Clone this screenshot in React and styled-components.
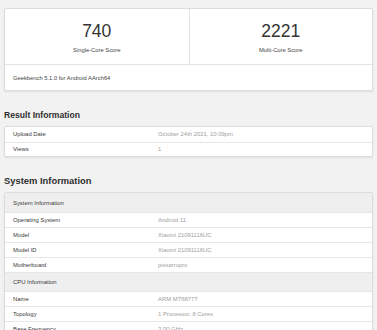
import React from "react";
import styled, { createGlobalStyle } from "styled-components";

const GlobalStyle = createGlobalStyle`
  html, body {
    margin: 0;
    padding: 0;
    background: #f2f2f2;
    font-family: "Liberation Sans", Arial, sans-serif;
    color: #333;
    overflow: hidden;
  }
`;

const Page = styled.div`
  padding: 0 4px;
  margin-top: -9px;
`;

const SectionTitle = styled.div`
  font-weight: bold;
  font-size: ${(p) => (p.$small ? "8.6px" : "9.4px")};
  line-height: 12px;
  height: 12px;
  color: #2f2f2f;
  margin: ${(p) => (p.$first ? "0" : "18px")} 0 5px;
  white-space: nowrap;
`;

const Card = styled.div`
  background: #fff;
  border: 1px solid #dcdcdc;
  border-radius: 2px;
  box-shadow: 0 1px 2px rgba(0, 0, 0, 0.08);
  overflow: hidden;
`;

const Scores = styled.div`
  display: grid;
  grid-template-columns: 1fr 1fr;
  height: 55px;
  border-bottom: 1px solid #e4e4e4;
`;

const ScoreCell = styled.div`
  display: flex;
  flex-direction: column;
  align-items: center;
  padding-top: 13px;
  box-sizing: border-box;
  & + & {
    border-left: 1px solid #e4e4e4;
  }
`;

const ScoreValue = styled.div`
  font-size: 17.5px;
  line-height: 18px;
  color: #333;
`;

const ScoreLabel = styled.div`
  font-size: 5.8px;
  line-height: 8px;
  margin-top: 6px;
  color: #444;
`;

const CardFooter = styled.div`
  height: 25px;
  display: flex;
  align-items: center;
  padding-left: 8px;
  font-size: 5.8px;
  color: #444;
`;

const Row = styled.div`
  display: grid;
  grid-template-columns: 145px 1fr;
  align-items: center;
  box-sizing: border-box;
  height: ${(p) => (p.$head ? "19px" : p.$tight ? "14.5px" : "15px")};
  padding-left: 8px;
  background: ${(p) => (p.$head ? "#efefef" : "#fff")};
  font-size: 5.9px;
  & + & {
    border-top: 1px solid #e6e6e6;
  }
`;

const Label = styled.div`
  color: #3a3a3a;
  white-space: nowrap;
`;

const Value = styled.div`
  color: #a0a0a0;
  white-space: nowrap;
`;

const resultRows = [
  ["Upload Date", "October 24th 2021, 10:09pm"],
  ["Views", "1"],
];

const systemRows = [
  { head: "System Information" },
  ["Operating System", "Android 11"],
  ["Model", "Xiaomi 21091116UC"],
  ["Model ID", "Xiaomi 21091116UC"],
  ["Motherboard", "pissarropro"],
  { head: "CPU Information" },
  ["Name", "ARM MT6877T"],
  ["Topology", "1 Processor, 8 Cores"],
  ["Base Frequency", "3.00 GHz"],
];

const InfoTable = ({ rows, tight }) => (
  <Card>
    {rows.map((r, i) =>
      r.head ? (
        <Row key={i} $head>
          <Label>{r.head}</Label>
        </Row>
      ) : (
        <Row key={i} $tight={tight}>
          <Label>{r[0]}</Label>
          <Value>{r[1]}</Value>
        </Row>
      )
    )}
  </Card>
);

export default function App() {
  return (
    <>
      <GlobalStyle />
      <Page>
        <SectionTitle $first>Benchmark Results</SectionTitle>
        <Card>
          <Scores>
            <ScoreCell>
              <ScoreValue>740</ScoreValue>
              <ScoreLabel>Single-Core Score</ScoreLabel>
            </ScoreCell>
            <ScoreCell>
              <ScoreValue>2221</ScoreValue>
              <ScoreLabel>Multi-Core Score</ScoreLabel>
            </ScoreCell>
          </Scores>
          <CardFooter>Geekbench 5.1.0 for Android AArch64</CardFooter>
        </Card>

        <SectionTitle $small>Result Information</SectionTitle>
        <InfoTable rows={resultRows} tight />

        <SectionTitle>System Information</SectionTitle>
        <InfoTable rows={systemRows} />
      </Page>
    </>
  );
}
